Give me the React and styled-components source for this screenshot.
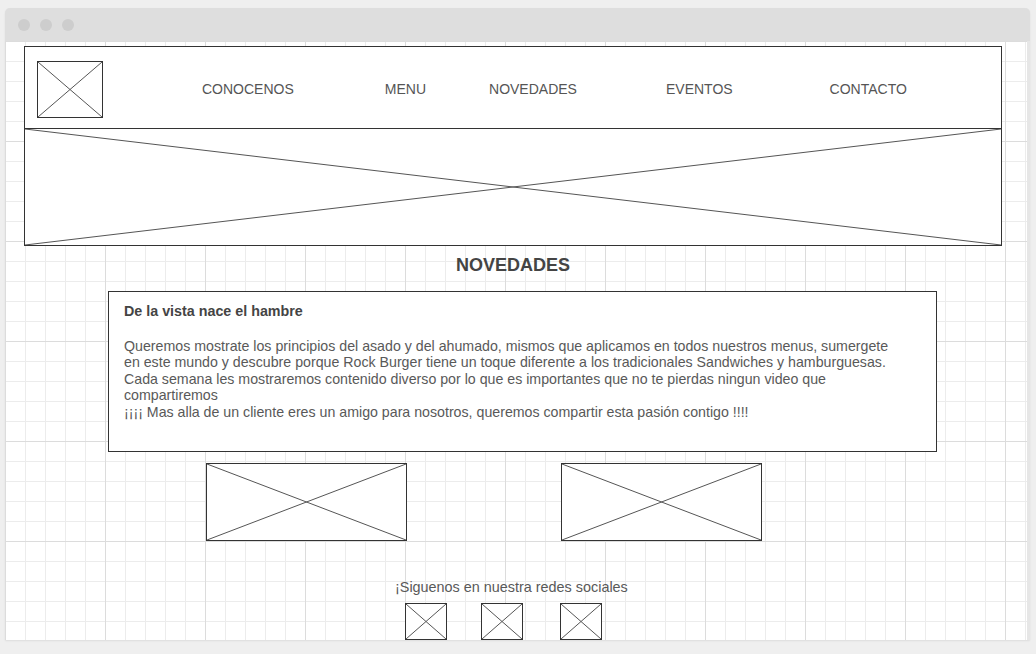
import React from "react";
import styled, { createGlobalStyle } from "styled-components";

const Global = createGlobalStyle`
  html, body { margin: 0; padding: 0; background: #efefef; }
  body { font-family: "Liberation Sans", Arial, sans-serif; color: #555; }
  * { box-sizing: border-box; }
`;

const Page = styled.div`
  width: 1036px;
  height: 654px;
  padding: 8px 0 0 5px;
  overflow: hidden;
`;

const Window = styled.div`
  width: 1025px;
  border-radius: 5px 5px 0 0;
  background: #e6e6e6;
  box-shadow: 0 1px 2px rgba(0, 0, 0, 0.08);
`;

const TitleBar = styled.div`
  height: 33px;
  background: #dedede;
  border-radius: 5px 5px 0 0;
  display: flex;
  align-items: center;
  gap: 10px;
  padding: 0 0 0 13px;
`;

const Dot = styled.span`
  width: 12px;
  height: 12px;
  border-radius: 50%;
  background: #cdcdcd;
`;

const Canvas = styled.div`
  height: 599px;
  margin-right: 3px;
  overflow: hidden;
  background-color: #fff;
  background-image:
    linear-gradient(to right, #dcdcdc 1px, transparent 1px),
    linear-gradient(to bottom, #dcdcdc 1px, transparent 1px),
    linear-gradient(to right, #ececec 1px, transparent 1px),
    linear-gradient(to bottom, #ececec 1px, transparent 1px);
  background-size: 100px 100px, 100px 100px, 20px 20px, 20px 20px;
  padding-top: 5px;
`;

const Placeholder = styled.div`
  position: relative;
  flex: none;
  width: ${(p) => p.$w}px;
  height: ${(p) => p.$h}px;
  background: #fff;
  border: 1px solid #333;
`;

const Cross = styled.svg`
  position: absolute;
  inset: 0;
  width: 100%;
  height: 100%;
`;

function XBox({ w, h, className }) {
  return (
    <Placeholder $w={w} $h={h} className={className}>
      <Cross viewBox="0 0 100 100" preserveAspectRatio="none">
        <line x1="0" y1="0" x2="100" y2="100" stroke="#555" strokeWidth="1" vectorEffect="non-scaling-stroke" />
        <line x1="100" y1="0" x2="0" y2="100" stroke="#555" strokeWidth="1" vectorEffect="non-scaling-stroke" />
      </Cross>
    </Placeholder>
  );
}

const Header = styled.div`
  margin-left: 19px;
  width: 978px;
`;

const NavBar = styled.div`
  height: 83px;
  background: #fff;
  border: 1px solid #333;
  display: flex;
  align-items: center;
  padding: 3px 0 0 12px;
`;

const NavLink = styled.a`
  margin-left: ${(p) => p.$ml}px;
  font-size: 14px;
  line-height: 16px;
  color: #555;
  text-decoration: none;
  white-space: nowrap;
`;

const Hero = styled(XBox)`
  border-top: none;
`;

const Heading = styled.h2`
  margin: 9px 0 0 19px;
  width: 978px;
  text-align: center;
  font-size: 18px;
  line-height: 21px;
  font-weight: bold;
  color: #444;
`;

const Card = styled.div`
  margin: 15px 0 0 103px;
  width: 829px;
  height: 161px;
  background: #fff;
  border: 1px solid #333;
  padding: 11px 15px 0 15px;
`;

const CardTitle = styled.div`
  font-size: 14.3px;
  line-height: 16.5px;
  font-weight: bold;
  color: #444;
  margin-bottom: 18px;
`;

const CardText = styled.p`
  margin: 0;
  width: 798px;
  font-size: 14.2px;
  line-height: 16.6px;
  color: #595959;
`;

const ImageRow = styled.div`
  display: flex;
  gap: 154px;
  margin: 11px 0 0 201px;
`;

const Social = styled.div`
  margin: 38px 0 0 390px;
  font-size: 14.4px;
  line-height: 16px;
  color: #595959;
`;

const IconRow = styled.div`
  display: flex;
  margin: 8px 0 0 400px;
`;

const SocialIcon = styled(XBox)`
  margin-left: ${(p) => p.$ml}px;
`;

export default function App() {
  return (
    <>
      <Global />
      <Page>
        <Window>
          <TitleBar>
            <Dot />
            <Dot />
            <Dot />
          </TitleBar>
          <Canvas>
            <Header>
              <NavBar>
                <XBox w={66} h={57} />
                <NavLink $ml={99}>CONOCENOS</NavLink>
                <NavLink $ml={91}>MENU</NavLink>
                <NavLink $ml={63}>NOVEDADES</NavLink>
                <NavLink $ml={89}>EVENTOS</NavLink>
                <NavLink $ml={97}>CONTACTO</NavLink>
              </NavBar>
              <Hero w={978} h={117} />
            </Header>
            <Heading>NOVEDADES</Heading>
            <Card>
              <CardTitle>De la vista nace el hambre</CardTitle>
              <CardText>
                Queremos mostrate los principios del asado y del ahumado, mismos que aplicamos en todos nuestros menus, sumergete
                <br />
                en este mundo y descubre porque Rock Burger tiene un toque diferente a los tradicionales Sandwiches y hamburguesas.
                <br />
                Cada semana les mostraremos contenido diverso por lo que es importantes que no te pierdas ningun video que
                <br />
                compartiremos
                <br />
                ¡¡¡¡ Mas alla de un cliente eres un amigo para nosotros, queremos compartir esta pasión contigo !!!!
              </CardText>
            </Card>
            <ImageRow>
              <XBox w={201} h={78} />
              <XBox w={201} h={78} />
            </ImageRow>
            <Social>¡Siguenos en nuestra redes sociales</Social>
            <IconRow>
              <SocialIcon w={42} h={37} $ml={0} />
              <SocialIcon w={42} h={37} $ml={34} />
              <SocialIcon w={42} h={37} $ml={37} />
            </IconRow>
          </Canvas>
        </Window>
      </Page>
    </>
  );
}
